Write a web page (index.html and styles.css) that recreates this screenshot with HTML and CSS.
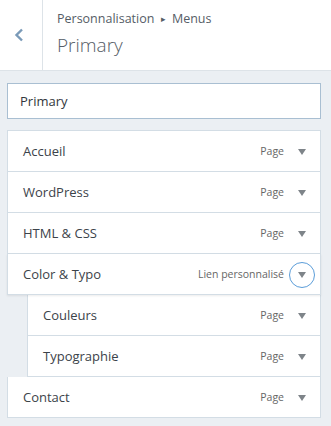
FILE: index.html
```html
<!DOCTYPE html>
<html lang="fr">
<head>
    <meta charset="UTF-8">
    <meta name="viewport" content="width=device-width, initial-scale=1.0">
    <title>Menus</title>
    <link rel="stylesheet" href="styles.css">
</head>
<body>

    <header class="panel-head">
        <button class="back-btn" aria-label="Retour">
            <svg width="10" height="14" viewBox="0 0 10 14"><path d="M8 1.5 L2.5 7 L8 12.5" fill="none" stroke="#7a9ab8" stroke-width="2.4"/></svg>
        </button>
        <div class="head-text">
            <div class="crumbs">Personnalisation <span class="sep">&#9656;</span> Menus</div>
            <div class="title">Primary</div>
        </div>
    </header>

    <main class="panel-body">
        <input class="menu-name" type="text" value="Primary">

        <ul class="menu-items">
            <li class="item"><span class="item-title">Accueil</span><span class="item-type">Page</span><span class="toggle"></span></li>
            <li class="item"><span class="item-title">WordPress</span><span class="item-type">Page</span><span class="toggle"></span></li>
            <li class="item"><span class="item-title">HTML &amp; CSS</span><span class="item-type">Page</span><span class="toggle"></span></li>
            <li class="item focus"><span class="item-title">Color &amp; Typo</span><span class="item-type">Lien personnalisé</span><span class="toggle"></span></li>
            <li class="item sub"><span class="item-title">Couleurs</span><span class="item-type">Page</span><span class="toggle"></span></li>
            <li class="item sub"><span class="item-title">Typographie</span><span class="item-type">Page</span><span class="toggle"></span></li>
            <li class="item"><span class="item-title">Contact</span><span class="item-type">Page</span><span class="toggle"></span></li>
        </ul>
    </main>

</body>
</html>
```

FILE: styles.css
```css
* {
    box-sizing: border-box;
    margin: 0;
    padding: 0;
}

body {
    background: #ebeff3;
    font-family: 'Open Sans', sans-serif;
    color: #32373c;
}

.panel-head {
    display: flex;
    height: 71px;
    background: #fff;
    border-bottom: 1px solid #dde3e8;
}

.back-btn {
    width: 43px;
    border: none;
    border-right: 1px solid #dde3e8;
    background: #fff;
    display: flex;
    align-items: center;
    justify-content: center;
    padding-right: 4px;
}

.head-text {
    padding: 10px 0 0 14px;
}

.crumbs {
    font-size: 12.5px;
    color: #555d66;
    line-height: 18px;
}

.crumbs .sep {
    font-size: 9px;
    margin: 0 3px;
    position: relative;
    top: -1px;
}

.title {
    font-size: 19px;
    font-weight: 300;
    color: #555d66;
    line-height: 26px;
    margin-top: 3px;
}

.panel-body {
    padding: 12px 10px 0 7px;
}

.menu-name {
    display: block;
    width: 100%;
    height: 36px;
    border: 1px solid #a9bfd2;
    background: #fff;
    font-family: inherit;
    font-size: 13px;
    color: #32373c;
    padding: 0 12px;
    outline: none;
}

.menu-items {
    list-style: none;
    margin-top: 11px;
}

.item {
    display: flex;
    align-items: center;
    height: 41px;
    background: #fff;
    border: 1px solid #d3dde5;
    border-top: none;
    padding-left: 15px;
    position: relative;
}

.item:first-child {
    height: 42px;
    border-top: 1px solid #d3dde5;
}

.item.sub {
    margin-left: 20px;
}

.item.focus {
    z-index: 1;
    box-shadow: 0 1px 2px rgba(0, 0, 0, 0.08);
}

.item-title {
    flex: 1;
    font-size: 13px;
    color: #3c434a;
}

.item-type {
    font-size: 10.5px;
    color: #666;
}

.toggle {
    width: 36px;
    height: 100%;
    display: flex;
    align-items: center;
    justify-content: center;
}

.toggle::before {
    content: "";
    border-left: 4px solid transparent;
    border-right: 4px solid transparent;
    border-top: 6px solid #7e8489;
    margin-top: 1px;
}

.focus .toggle::after {
    content: "";
    position: absolute;
    right: 5px;
    top: 8px;
    width: 24px;
    height: 24px;
    border: 1.5px solid #5b9dd9;
    border-radius: 50%;
}
```
